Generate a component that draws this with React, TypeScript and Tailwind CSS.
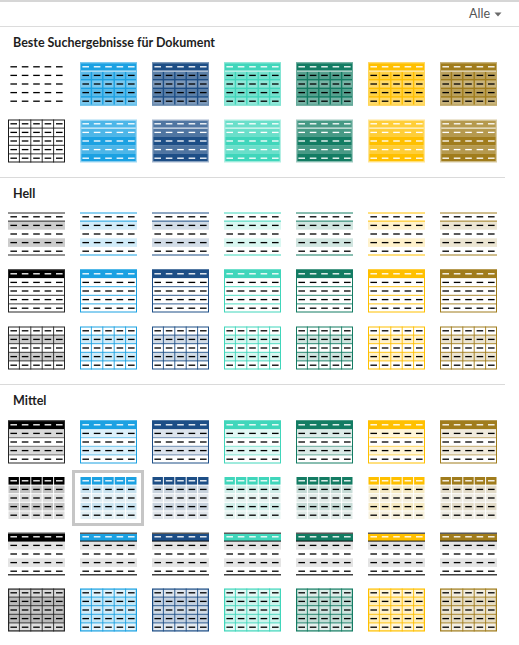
import React from 'react';

type Kind =
  | 'plain'
  | 'grid'
  | 'colorGrid'
  | 'medShade2'
  | 'lightShade'
  | 'lightList'
  | 'lightGrid'
  | 'medShade1'
  | 'gapGrid'
  | 'medList'
  | 'medGrid';

const W = 57;
const H = 44;
const CW = 11.4;
const RH = 8.6;
const Y0 = 0.5;
const YB = Y0 + 5 * RH;

const PALETTE = ['#000000', '#1ba1e2', '#1d4e86', '#40d6bb', '#137c63', '#ffc000', '#a07c1c'];

function toRgb(h: string): [number, number, number] {
  const n = parseInt(h.slice(1), 16);
  return [(n >> 16) & 255, (n >> 8) & 255, n & 255];
}
function mix(hex: string, t: number, target = '#ffffff'): string {
  const a = toRgb(hex);
  const b = toRgb(target);
  const c = a.map((v, i) => Math.round(v + (b[i] - v) * t));
  return '#' + c.map((v) => v.toString(16).padStart(2, '0')).join('');
}

const rowY = (r: number) => Y0 + r * RH;
const colX = (c: number) => c * CW;

function Thumb({ kind, base }: { kind: Kind; base: string }) {
  const els: React.ReactElement[] = [];
  let k = 0;
  const line = base === '#000000' ? '#262626' : base;
  const rect = (x: number, y: number, w: number, h: number, fill: string) =>
    els.push(<rect key={k++} x={x} y={y} width={w} height={h} fill={fill} />);
  const hl = (y: number, color: string, sw = 1, x1 = 0, x2 = W) =>
    els.push(<line key={k++} x1={x1} x2={x2} y1={y} y2={y} stroke={color} strokeWidth={sw} />);
  const vl = (x: number, color: string, sw = 1, y1 = Y0, y2 = YB) =>
    els.push(<line key={k++} x1={x} x2={x} y1={y1} y2={y2} stroke={color} strokeWidth={sw} />);
  const border = (color: string, sw = 1) =>
    els.push(
      <rect
        key={k++}
        x={sw / 2}
        y={Y0 + sw / 2}
        width={W - sw}
        height={YB - Y0 - sw}
        fill="none"
        stroke={color}
        strokeWidth={sw}
      />
    );
  const dashes = (r: number, color: string) => {
    for (let c = 0; c < 5; c++) rect(colX(c) + 2.4, rowY(r) + RH / 2 - 0.65, 6.6, 1.3, color);
  };
  const gridLines = (color: string, sw = 0.8) => {
    for (let c = 1; c < 5; c++) vl(colX(c), color, sw);
    for (let r = 1; r < 5; r++) hl(rowY(r), color, sw);
  };

  switch (kind) {
    case 'plain':
      for (let r = 0; r < 5; r++) dashes(r, '#000');
      break;
    case 'grid':
      rect(0, Y0, W, YB - Y0, '#fff');
      gridLines('#1a1a1a', 0.9);
      border('#1a1a1a', 1);
      for (let r = 0; r < 5; r++) dashes(r, '#000');
      break;
    case 'colorGrid':
      rect(0, Y0, W, YB - Y0, base);
      for (let r = 1; r < 5; r++)
        for (let c = 0; c < 5; c++)
          rect(colX(c) + 0.7, rowY(r) + 0.7, CW - 1.4, RH - 1.4, r % 2 ? mix(base, 0.28) : mix(base, 0.42));
      border(mix(base, 0.35), 1);
      hl(rowY(1), '#fff', 1, 1, W - 1);
      dashes(0, '#fff');
      for (let r = 1; r < 5; r++) dashes(r, '#000');
      break;
    case 'medShade2':
      rect(0, Y0, W, YB - Y0, mix(base, 0.6));
      rect(1.3, Y0 + 1.3, W - 2.6, RH - 1.3, mix(base, 0.22));
      for (let r = 1; r < 5; r++)
        rect(1.3, rowY(r), W - 2.6, r === 4 ? RH - 1.3 : RH, r % 2 ? mix(base, 0.22) : base);
      hl(rowY(1), '#fff', 1, 1.3, W - 1.3);
      for (let r = 0; r < 5; r++) dashes(r, '#fff');
      break;
    case 'lightShade':
      rect(0, Y0, W, YB - Y0, '#fff');
      rect(0, rowY(1), W, RH, mix(base, 0.8));
      rect(0, rowY(3), W, RH, mix(base, 0.8));
      hl(Y0 + 0.5, line, 1);
      hl(rowY(1), line, 1);
      hl(YB - 0.5, line, 1);
      for (let r = 0; r < 5; r++) dashes(r, '#000');
      break;
    case 'lightList':
      rect(0, Y0, W, YB - Y0, '#fff');
      rect(0, Y0, W, RH, base);
      for (let r = 2; r < 5; r++) hl(rowY(r), line, 0.9);
      border(line, 1);
      dashes(0, '#fff');
      for (let r = 1; r < 5; r++) dashes(r, '#000');
      break;
    case 'lightGrid':
      rect(0, Y0, W, YB - Y0, '#fff');
      rect(0, rowY(1), W, RH, mix(base, 0.8));
      rect(0, rowY(3), W, RH, mix(base, 0.8));
      gridLines(line, 0.9);
      border(line, 1);
      for (let r = 0; r < 5; r++) dashes(r, '#000');
      break;
    case 'medShade1':
      rect(0, Y0, W, YB - Y0, '#fff');
      rect(0, rowY(1), W, RH, mix(base, 0.85));
      rect(0, rowY(3), W, RH, mix(base, 0.85));
      rect(0, Y0, W, RH, base);
      for (let r = 2; r < 5; r++) hl(rowY(r), mix(line, 0.3), 0.9);
      border(line, 1);
      dashes(0, '#fff');
      for (let r = 1; r < 5; r++) dashes(r, '#000');
      break;
    case 'gapGrid':
      rect(0, Y0, W, YB - Y0, '#fff');
      for (let r = 0; r < 5; r++)
        for (let c = 0; c < 5; c++)
          rect(
            colX(c) + 0.5,
            rowY(r) + 0.5,
            CW - 1,
            RH - 1,
            r === 0 ? base : r % 2 ? mix(base, 0.8, '#f4f4f4') : mix(base, 0.9, '#f6f6f6')
          );
      dashes(0, '#fff');
      for (let r = 1; r < 5; r++) dashes(r, '#000');
      break;
    case 'medList':
      rect(0, Y0, W, YB - Y0, '#fff');
      rect(0, rowY(1), W, RH, '#e4e4e4');
      rect(0, rowY(3), W, RH, '#e4e4e4');
      rect(0, Y0 + 1.5, W, RH - 1.5, base);
      hl(Y0 + 0.75, '#5a5a5a', 1.5);
      hl(rowY(1), '#000', 0.9);
      hl(YB - 0.75, '#404040', 1.5);
      dashes(0, '#fff');
      for (let r = 1; r < 5; r++) dashes(r, '#000');
      break;
    case 'medGrid': {
      const fills = base === '#000000' ? [0.85, 0.73, 0.78, 0.73, 0.87] : [0.86, 0.74, 0.8, 0.74, 0.88];
      for (let r = 0; r < 5; r++) rect(0, rowY(r), W, RH, mix(base, fills[r]));
      gridLines(line, 0.9);
      border(line, 1.2);
      for (let r = 0; r < 5; r++) dashes(r, '#000');
      break;
    }
  }

  return (
    <svg width={W} height={H} viewBox={`0 0 ${W} ${H}`} className="block shrink-0">
      {els}
    </svg>
  );
}

type RowSpec = { first: Kind; rest: Kind };

function Gallery({
  rows,
  rowH,
  selected,
}: {
  rows: RowSpec[];
  rowH: 'h57' | 'h56';
  selected?: [number, number];
}) {
  return (
    <div className="grid grid-cols-[repeat(7,72px)]">
      {rows.map((row, ri) =>
        PALETTE.map((base, ci) => {
          const isSel = selected && selected[0] === ri && selected[1] === ci;
          const kind = ci === 0 ? row.first : row.rest;
          return (
            <div
              key={`${ri}-${ci}`}
              className={
                (rowH === 'h57' ? 'h-[57px] ' : 'h-[56px] ') +
                (isSel
                  ? 'flex items-center border-[3px] border-[#c6c6c6] pl-[5px]'
                  : 'flex items-center pl-[8px]')
              }
            >
              <Thumb kind={kind} base={base} />
            </div>
          );
        })
      )}
    </div>
  );
}

export default function App() {
  const font = { fontFamily: 'Lato, "Open Sans", "Liberation Sans", sans-serif' };
  return (
    <div className="w-[519px] h-[645px] overflow-hidden bg-white" style={font}>
      <div className="border-t-2 border-[#d6d6d6]" />
      <div className="flex h-[25px] items-center justify-end border-b border-[#dcdcdc] pr-[17px]">
        <span className="text-[12.5px] leading-[16px] text-[#555555]">Alle</span>
        <svg width="8" height="5" viewBox="0 0 8 5" className="ml-[4px] mt-[1px]">
          <path d="M0.5 0.5 L7.5 0.5 L4 4.5 Z" fill="#6a6a6a" />
        </svg>
      </div>

      <div className="h-[28px] pl-[13px] pt-[8px] text-[12.5px] font-bold leading-[16px] text-[#1e1e1e]">
        Beste Suchergebnisse für Dokument
      </div>
      <Gallery
        rowH="h57"
        rows={[
          { first: 'plain', rest: 'colorGrid' },
          { first: 'grid', rest: 'medShade2' },
        ]}
      />
      <div className="mt-[8px] mr-[14px] h-px bg-[#dadada]" />

      <div className="h-[27px] pl-[13px] pt-[8px] text-[12.5px] font-bold leading-[16px] text-[#1e1e1e]">Hell</div>
      <Gallery
        rowH="h57"
        rows={[
          { first: 'lightShade', rest: 'lightShade' },
          { first: 'lightList', rest: 'lightList' },
          { first: 'lightGrid', rest: 'lightGrid' },
        ]}
      />
      <div className="mt-[8px] mr-[14px] h-px bg-[#dadada]" />

      <div className="h-[29px] pl-[13px] pt-[8px] text-[12.5px] font-bold leading-[16px] text-[#1e1e1e]">Mittel</div>
      <Gallery
        rowH="h56"
        selected={[1, 1]}
        rows={[
          { first: 'medShade1', rest: 'medShade1' },
          { first: 'gapGrid', rest: 'gapGrid' },
          { first: 'medList', rest: 'medList' },
          { first: 'medGrid', rest: 'medGrid' },
        ]}
      />
    </div>
  );
}
